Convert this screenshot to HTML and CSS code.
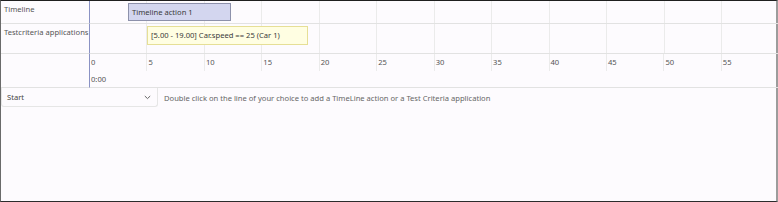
FILE: index.html
```html
<!DOCTYPE html>
<html>
<head>
<meta charset="utf-8">
<link rel="stylesheet" href="styles.css">
</head>
<body>
<div class="frame">
  <div class="chart">
    <div class="label">Timeline</div>
    <div class="track track-timeline">
      <div class="bar bar-action" style="left:38px;width:103px">Timeline action 1</div>
    </div>
    <div class="label label-tall">Testcriteria applications</div>
    <div class="track track-criteria">
      <div class="bar bar-criteria" style="left:57px;width:161px">[5.00 - 19.00] Car.speed == 25 (Car 1)</div>
    </div>
    <div class="label label-axis"></div>
    <div class="axis">
      <div class="ticks">
        <span class="tick">0</span>
        <span class="tick">5</span>
        <span class="tick">10</span>
        <span class="tick">15</span>
        <span class="tick">20</span>
        <span class="tick">25</span>
        <span class="tick">30</span>
        <span class="tick">35</span>
        <span class="tick">40</span>
        <span class="tick">45</span>
        <span class="tick">50</span>
        <span class="tick">55</span>
      </div>
      <div class="time">0:00</div>
    </div>
  </div>
  <div class="toolbar">
    <div class="select">
      <span>Start</span>
      <svg class="chev" width="7" height="5" viewBox="0 0 7 5"><path d="M0.8 1 L3.5 3.6 L6.2 1" fill="none" stroke="#666" stroke-width="1"/></svg>
    </div>
    <div class="hint">Double click on the line of your choice to add a TimeLine action or a Test Criteria application</div>
  </div>
</div>
</body>
</html>
```
FILE: styles.css
```css
html, body {
  margin: 0;
  padding: 0;
  background: #fdfbfe;
}
body {
  font-family: "Noto Sans", "Open Sans", sans-serif;
  font-size: 7.6px;
  color: #555;
}
.frame {
  width: 778px;
  height: 202px;
  box-sizing: border-box;
  border-top: 1px solid #1f1f1f;
  border-left: 1px solid #6a6a6a;
  border-right: 2px solid #9c9c9c;
  border-bottom: 1px solid #2c2c2c;
  background: #fdfbfe;
  display: flex;
  flex-direction: column;
}
.chart {
  display: grid;
  grid-template-columns: 89px 1fr;
  grid-template-rows: 23px 30px 34px;
}
.label {
  border-right: 1px solid #8a92c4;
  border-bottom: 1px solid #e2e2e2;
  padding: 3px 0 0 3px;
  line-height: 11px;
  white-space: nowrap;
}
.label-tall {
  padding-top: 3px;
}
.track {
  position: relative;
  border-bottom: 1px solid #e2e2e2;
  background-image: repeating-linear-gradient(to right, transparent 0 56.45px, #ebebeb 56.45px 57.45px);
}
.bar {
  position: absolute;
  box-sizing: border-box;
  padding-left: 3px;
  color: #3a3a3a;
  white-space: nowrap;
  overflow: hidden;
}
.bar-action {
  top: 2px;
  height: 18px;
  line-height: 16px;
  background: #d3d6ef;
  border: 1px solid #8d91ab;
}
.bar-criteria {
  top: 2px;
  height: 19px;
  line-height: 17px;
  background: #fffee2;
  border: 1px solid #e6df96;
}
.axis {
  border-bottom: 1px solid #e2e2e2;
  display: flex;
  flex-direction: column;
}
.ticks {
  display: flex;
  height: 17px;
}
.tick {
  flex: 0 0 57.45px;
  box-sizing: border-box;
  padding: 3px 0 0 1px;
  line-height: 11px;
  border-right: 1px solid #ebebeb;
}
.time {
  padding: 3px 0 0 1px;
  line-height: 11px;
}
.toolbar {
  display: flex;
  align-items: center;
  gap: 6px;
}
.select {
  width: 157px;
  height: 19px;
  box-sizing: border-box;
  border: 1px solid #e6e6e6;
  border-top: none;
  border-radius: 0 0 3px 3px;
  display: flex;
  align-items: center;
  justify-content: space-between;
  padding: 0 6px 0 5px;
  color: #444;
}
.chev {
  display: block;
}
.hint {
  color: #666;
  white-space: nowrap;
}
```
